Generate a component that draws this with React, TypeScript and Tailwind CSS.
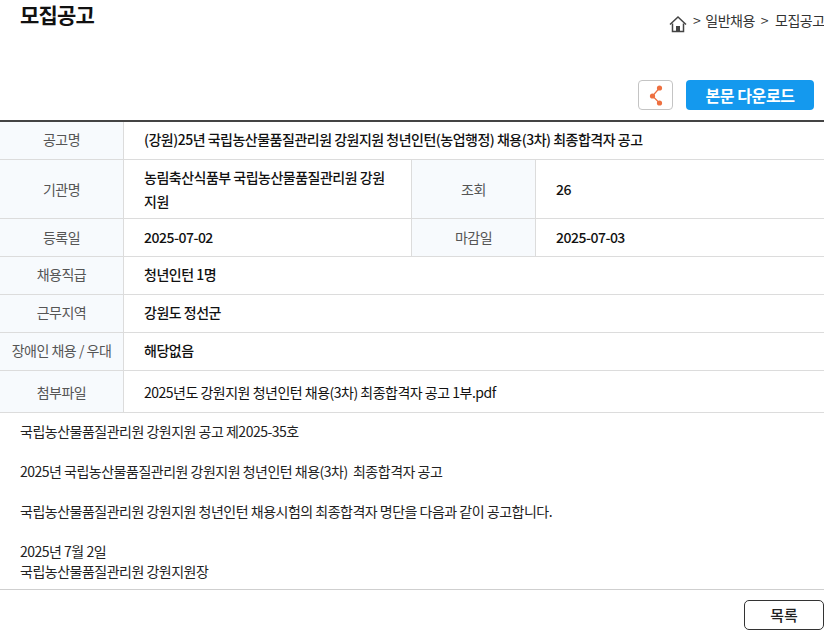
const font = { fontFamily: '"Noto Sans CJK KR", "Noto Sans", sans-serif' };

const Label = ({ children, className = "w-[124px]" }: { children: React.ReactNode; className?: string }) => (
  <div className={`${className} shrink-0 flex items-center justify-center bg-[#f7fafd] border-r border-[#dcdcdc] text-sm text-[#555] tracking-[-0.5px]`}>
    {children}
  </div>
);

const Value = ({ children, className = "flex-1", bold = true }: { children: React.ReactNode; className?: string; bold?: boolean }) => (
  <div className={`${className} flex items-center pl-5 pr-5 text-sm leading-[24px] tracking-[-0.5px] text-[#111] ${bold ? "font-medium" : ""}`}>
    {children}
  </div>
);

const Row = ({ h, children }: { h: string; children: React.ReactNode }) => (
  <div className={`${h} flex border-b border-[#dcdcdc]`}>{children}</div>
);

export default function App() {
  return (
    <div className="w-[824px] h-[630px] overflow-hidden bg-white" style={font}>
      <div className="h-[80px] flex justify-between pl-5">
        <h1 className="text-[21px] leading-[28px] font-bold text-[#111] tracking-[-0.8px]">모집공고</h1>
        <div className="flex items-start pt-[10px] text-sm leading-[20px] text-[#333] whitespace-nowrap tracking-[-0.5px] w-[155px] shrink-0">
          <svg width="18" height="18" viewBox="0 0 18 18" className="mt-[5px] mr-[6px] shrink-0">
            <path d="M1 9.5 L9 2 L17 9.5" fill="none" stroke="#444" strokeWidth="1.5" />
            <path d="M3.5 8.5 V16.5 H14.5 V8.5" fill="none" stroke="#444" strokeWidth="1.5" />
            <rect x="7" y="11" width="4" height="5.5" fill="#444" />
          </svg>
          <span className="mr-[4px]">&gt;</span>
          <span className="ml-[1px]">일반채용</span>
          <span className="ml-[6px] mr-[6px]">&gt;</span>
          <span className="ml-[1px]">모집공고</span>
        </div>
      </div>
      <div className="h-[40px] flex justify-end items-start gap-[13px] pr-[10px]">
        <button className="w-[35px] h-[30px] rounded-[4px] border border-[#c4c4c4] flex items-center justify-center">
          <svg width="16" height="22" viewBox="0 0 16 22">
            <path d="M11.5 4 L4.5 12 L11.5 19" fill="none" stroke="#ee7040" strokeWidth="1.2" />
            <circle cx="11.5" cy="4" r="2.6" fill="#ee7040" />
            <circle cx="4.5" cy="12" r="2.6" fill="#ee7040" />
            <circle cx="11.5" cy="19" r="2.6" fill="#ee7040" />
          </svg>
        </button>
        <button className="w-[128px] h-[30px] rounded-[4px] bg-[#1499ee] text-white text-base font-bold tracking-[-0.4px]">본문 다운로드</button>
      </div>

      <div className="border-t-2 border-[#444]">
        <Row h="h-[38px] [&>div]:pb-[4px]">
          <Label>공고명</Label>
          <Value>(강원)25년 국립농산물품질관리원 강원지원 청년인턴(농업행정) 채용(3차) 최종합격자 공고</Value>
        </Row>
        <Row h="h-[59px]">
          <Label>기관명</Label>
          <Value className="w-[287px]">농림축산식품부 국립농산물품질관리원 강원지원</Value>
          <Label className="w-[125px] border-l">조회</Label>
          <Value>26</Value>
        </Row>
        <Row h="h-[38px] [&>div]:pb-[2px]">
          <Label>등록일</Label>
          <Value className="w-[287px]">2025-07-02</Value>
          <Label className="w-[125px] border-l">마감일</Label>
          <Value>2025-07-03</Value>
        </Row>
        <Row h="h-[38px] [&>div]:pb-[4px]">
          <Label>채용직급</Label>
          <Value>청년인턴 1명</Value>
        </Row>
        <Row h="h-[38px] [&>div]:pb-[4px]">
          <Label>근무지역</Label>
          <Value>강원도 정선군</Value>
        </Row>
        <Row h="h-[38px] [&>div]:pb-[4px]">
          <Label>장애인 채용 / 우대</Label>
          <Value>해당없음</Value>
        </Row>
        <Row h="h-[42px]">
          <Label>첨부파일</Label>
          <Value bold={false}>2025년도 강원지원 청년인턴 채용(3차) 최종합격자 공고 1부.pdf</Value>
        </Row>
      </div>

      <div className="h-[177px] pl-5 pt-[8px] text-sm leading-[20px] tracking-[-0.5px] text-[#222] border-b border-[#cfcfcf]">
        <p>국립농산물품질관리원 강원지원 공고 제2025-35호</p>
        <p className="mt-5">2025년 국립농산물품질관리원 강원지원 청년인턴 채용(3차)&nbsp; 최종합격자 공고</p>
        <p className="mt-5">국립농산물품질관리원 강원지원 청년인턴 채용시험의 최종합격자 명단을 다음과 같이 공고합니다.</p>
        <p className="mt-5">2025년 7월 2일</p>
        <p>국립농산물품질관리원 강원지원장</p>
      </div>

      <div className="flex justify-end pt-[10px]">
        <button className="w-[80px] h-[30px] rounded-[5px] border border-[#333] text-[15px] text-[#222] font-medium">목록</button>
      </div>
    </div>
  );
}
